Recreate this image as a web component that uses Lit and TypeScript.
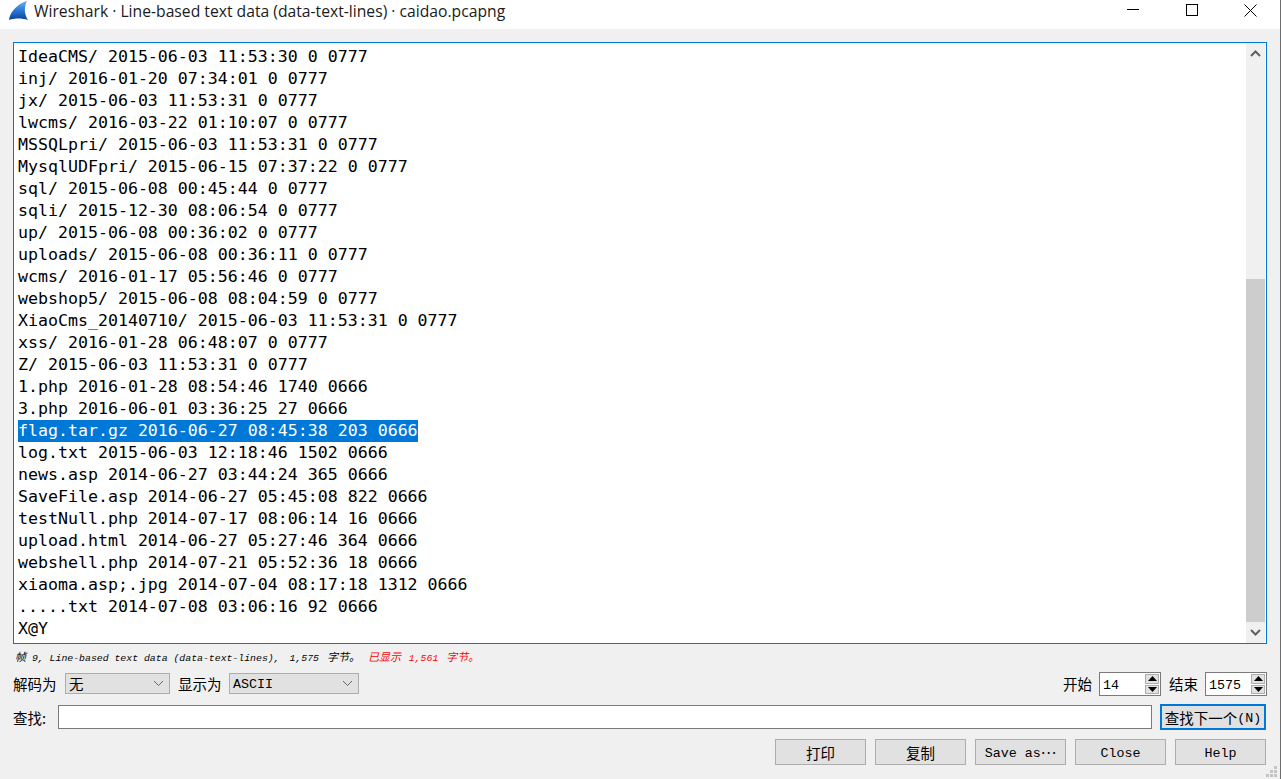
import { LitElement, html, css, svg } from "lit";
import { customElement } from "lit/decorators.js";

const lines = [
  "IdeaCMS/ 2015-06-03 11:53:30 0 0777",
  "inj/ 2016-01-20 07:34:01 0 0777",
  "jx/ 2015-06-03 11:53:31 0 0777",
  "lwcms/ 2016-03-22 01:10:07 0 0777",
  "MSSQLpri/ 2015-06-03 11:53:31 0 0777",
  "MysqlUDFpri/ 2015-06-15 07:37:22 0 0777",
  "sql/ 2015-06-08 00:45:44 0 0777",
  "sqli/ 2015-12-30 08:06:54 0 0777",
  "up/ 2015-06-08 00:36:02 0 0777",
  "uploads/ 2015-06-08 00:36:11 0 0777",
  "wcms/ 2016-01-17 05:56:46 0 0777",
  "webshop5/ 2015-06-08 08:04:59 0 0777",
  "XiaoCms_20140710/ 2015-06-03 11:53:31 0 0777",
  "xss/ 2016-01-28 06:48:07 0 0777",
  "Z/ 2015-06-03 11:53:31 0 0777",
  "1.php 2016-01-28 08:54:46 1740 0666",
  "3.php 2016-06-01 03:36:25 27 0666",
  "flag.tar.gz 2016-06-27 08:45:38 203 0666",
  "log.txt 2015-06-03 12:18:46 1502 0666",
  "news.asp 2014-06-27 03:44:24 365 0666",
  "SaveFile.asp 2014-06-27 05:45:08 822 0666",
  "testNull.php 2014-07-17 08:06:14 16 0666",
  "upload.html 2014-06-27 05:27:46 364 0666",
  "webshell.php 2014-07-21 05:52:36 18 0666",
  "xiaoma.asp;.jpg 2014-07-04 08:17:18 1312 0666",
  ".....txt 2014-07-08 03:06:16 92 0666",
  "X@Y",
];

const chevron = svg`<svg class="chev" width="11" height="7" viewBox="0 0 11 7"><path d="M1 1l4.5 4.5L10 1" fill="none" stroke="#666" stroke-width="1"/></svg>`;

const spin = html`<span class="spin">
  <span class="sb"><svg width="9" height="5" viewBox="0 0 9 5"><path d="M4.5 0L9 5H0z" fill="#000"/></svg></span>
  <span class="sb"><svg width="9" height="5" viewBox="0 0 9 5"><path d="M0 0h9L4.5 5z" fill="#000"/></svg></span>
</span>`;

@customElement("app-root")
export class AppRoot extends LitElement {
  static styles = css`
    :host {
      display: flex;
      flex-direction: column;
      position: relative;
      box-sizing: border-box;
      width: 1281px;
      height: 779px;
      overflow: hidden;
      background: #f0f0f0;
      border-right: 1px solid #6d6d6d;
      font-family: "Noto Sans CJK SC", sans-serif;
      font-size: 14.5px;
      color: #000;
    }
    .lat { font: 13.33px "Liberation Mono", monospace; margin-top: 2px; }
    .ell { font: 14.5px/0 "Noto Sans CJK SC", sans-serif; vertical-align: 3px; }
    .title {
      height: 29px;
      flex: none;
      background: #fff;
      display: flex;
      align-items: flex-start;
    }
    .logo { margin: 1px 0 0 9px; flex: none; }
    .title-text {
      margin-left: 5px;
      font: 15.7px/22px "Open Sans", "Noto Sans", sans-serif;
      color: #1a1a1a;
      white-space: nowrap;
      flex: 1;
    }
    .wbtns { display: flex; padding-top: 4px; }
    .wbtn { width: 59px; display: flex; justify-content: center; height: 13px; }
    .body { flex: 1; display: flex; flex-direction: column; padding: 13px 13px 0 13px; min-height: 0; }
    .view {
      height: 602px;
      flex: none;
      border: 1px solid #0078d7;
      background: #fff;
      display: flex;
      box-sizing: border-box;
    }
    .text {
      flex: 1;
      padding: 3px 0 0 4px;
      font: 16.6px/22px "DejaVu Sans Mono", monospace;
      white-space: pre;
      overflow: hidden;
    }
    .line { height: 22px; }
    .line.sel > span { background: #0078d7; color: #fff; display: inline-block; height: 22px; }
    .sbar {
      width: 19px;
      margin-right: 1px;
      background: #f0f0f0;
      display: flex;
      flex-direction: column;
      flex: none;
    }
    .arrow { height: 21px; display: flex; justify-content: center; align-items: center; flex: none; }
    .track { flex: 1; display: flex; flex-direction: column; padding-top: 215px; min-height: 0; }
    .thumb { flex: 1; background: #cdcdcd; }
    .info {
      height: 26px;
      font: italic 9.83px/25px "Liberation Mono", monospace;
      padding-left: 2px;
      white-space: pre;
    }
    .info .cj { font: italic 11px/25px "Noto Sans CJK SC", sans-serif; }
    .info .n { margin-left: 4px; }
    .info .m { margin-left: 2px; }
    .info .r { color: #f00; margin-left: 8px; }
    .row { display: flex; align-items: center; flex: none; }
    .r1 { height: 24px; margin-top: 2px; }
    .label { white-space: nowrap; }
    .r1 .label { margin-bottom: 2px; }
    .wl { width: 44px; }
    .wl2 { width: 43px; }
    .combo {
      box-sizing: border-box;
      height: 21px;
      background: #e1e1e1;
      border: 1px solid #adadad;
      display: flex;
      align-items: center;
      padding-left: 3px;
      position: relative;
      align-self: flex-start;
      margin-top: 1px;
    }
    .chev { position: absolute; right: 5px; top: 6px; }
    .c1 { width: 105px; margin-left: 8px; margin-right: 8px; }
    .c2 { width: 130px; margin-left: 8px; }
    .grow { flex: 1; }
    .num {
      box-sizing: border-box;
      width: 62px;
      height: 24px;
      background: #fff;
      border: 1px solid #7a7a7a;
      display: flex;
      align-items: center;
      padding-left: 3px;
      position: relative;
      margin-left: 7px;
    }
    .num.a { margin-right: 8px; }
    .spin { position: absolute; right: 1px; top: 1px; bottom: 1px; width: 14px; display: flex; flex-direction: column; gap: 1px; }
    .sb { flex: 1; background: #e1e1e1; border: 1px solid #adadad; display: flex; align-items: center; justify-content: center; box-sizing: border-box; }
    .r2 { height: 26px; margin-top: 8px; margin-right: 1px; }
    .fl { width: 45px; }
    .find {
      box-sizing: border-box;
      flex: 1;
      height: 24px;
      background: #fff;
      border: 1px solid #7a7a7a;
    }
    .btn {
      box-sizing: border-box;
      background: #e1e1e1;
      border: 1px solid #adadad;
      height: 26px;
      width: 91px;
      display: flex;
      align-items: center;
      justify-content: center;
      white-space: nowrap;
    }
    .btn.def { width: 106px; border: 2px solid #0078d7; margin-left: 8px; }
    .r3 { height: 26px; margin-top: 9px; margin-right: 1px; justify-content: flex-end; gap: 9px; }
    .grip { position: absolute; right: 3px; bottom: 2px; }
  `;

  render() {
    return html`
      <div class="title">
        <svg class="logo" width="20" height="19" viewBox="0 0 20 19">
          <defs><linearGradient id="g" x1="0" y1="0" x2="0" y2="1">
            <stop offset="0" stop-color="#6fb0ee"/><stop offset=".5" stop-color="#2a78d6"/><stop offset="1" stop-color="#0b3f98"/>
          </linearGradient></defs>
          <path d="M0 19C1 11 8 3 18 0C15 6 15 13 19 19C13 17 6 17 0 19Z" fill="url(#g)"/>
        </svg>
        <span class="title-text">Wireshark · Line-based text data (data-text-lines) · caidao.pcapng</span>
        <div class="wbtns">
          <span class="wbtn"><svg width="12" height="12" viewBox="0 0 12 12"><path d="M0 5.5h12" stroke="#000" fill="none"/></svg></span>
          <span class="wbtn"><svg width="12" height="12" viewBox="0 0 12 12"><rect x=".5" y=".5" width="11" height="11" stroke="#000" fill="none"/></svg></span>
          <span class="wbtn"><svg width="13" height="13" viewBox="0 0 13 13"><path d="M.5 .5l12 12M12.5 .5l-12 12" stroke="#000" fill="none"/></svg></span>
        </div>
      </div>
      <div class="body">
        <div class="view">
          <div class="text">${lines.map((l) =>
            l.startsWith("flag")
              ? html`<div class="line sel"><span>${l}</span></div>`
              : html`<div class="line">${l}</div>`
          )}</div>
          <div class="sbar">
            <div class="arrow"><svg width="11" height="7" viewBox="0 0 11 7"><path d="M1 6l4.5-4.5L10 6" fill="none" stroke="#606060" stroke-width="2"/></svg></div>
            <div class="track"><div class="thumb"></div></div>
            <div class="arrow"><svg width="11" height="7" viewBox="0 0 11 7"><path d="M1 1l4.5 4.5L10 1" fill="none" stroke="#606060" stroke-width="2"/></svg></div>
          </div>
        </div>
        <div class="info"><span class="cj">帧</span> 9, Line-based text data (data-text-lines), <span class="n">1,575</span> <span class="cj m">字节。</span><span class="r"><span class="cj">已显示</span> <span class="m">1,561</span> <span class="cj m">字节。</span></span></div>
        <div class="row r1">
          <span class="label wl">解码为</span>
          <span class="combo c1">无${chevron}</span>
          <span class="label wl2">显示为</span>
          <span class="combo c2"><span class="lat">ASCII</span>${chevron}</span>
          <span class="grow"></span>
          <span class="label">开始</span>
          <span class="num a"><span class="lat">14</span>${spin}</span>
          <span class="label">结束</span>
          <span class="num"><span class="lat">1575</span>${spin}</span>
        </div>
        <div class="row r2">
          <span class="label fl">查找:</span>
          <span class="find"></span>
          <span class="btn def">查找下一个<span class="lat">(N)</span></span>
        </div>
        <div class="row r3">
          <span class="btn">打印</span>
          <span class="btn">复制</span>
          <span class="btn"><span class="lat">Save as<span class="ell">…</span></span></span>
          <span class="btn"><span class="lat">Close</span></span>
          <span class="btn"><span class="lat">Help</span></span>
        </div>
      </div>
      <svg class="grip" width="11" height="11" viewBox="0 0 11 11" fill="#c4c4c4">
        <rect x="8" y="0" width="3" height="3"/>
        <rect x="4" y="4" width="3" height="3"/><rect x="8" y="4" width="3" height="3"/>
        <rect x="0" y="8" width="3" height="3"/><rect x="4" y="8" width="3" height="3"/><rect x="8" y="8" width="3" height="3"/>
      </svg>
    `;
  }
}
